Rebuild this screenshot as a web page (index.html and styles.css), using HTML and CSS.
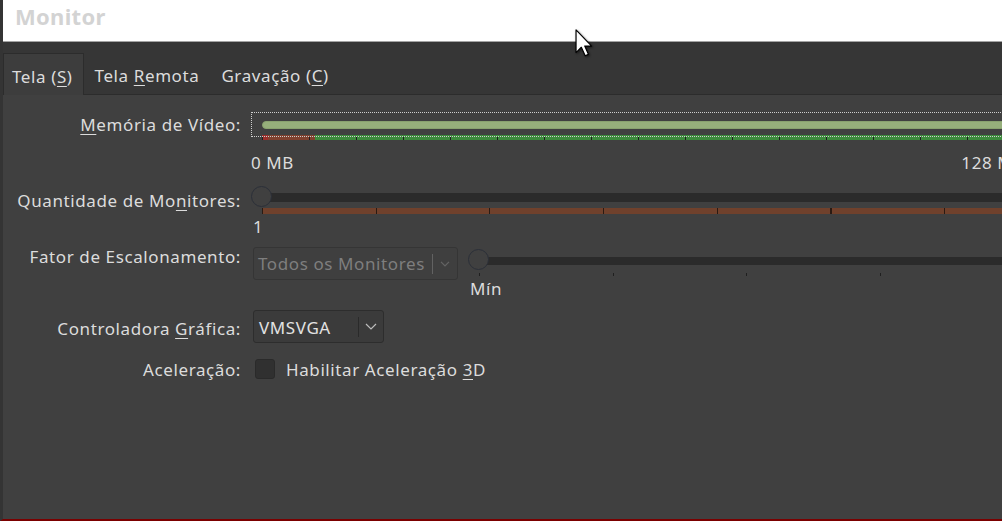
FILE: index.html
```html
<!DOCTYPE html>
<html lang="pt-BR">
<head>
<meta charset="utf-8">
<title>Monitor</title>
<link rel="stylesheet" href="styles.css">
</head>
<body>
<div class="app">
  <header class="titlebar"><span class="title">Monitor</span></header>
  <nav class="tabbar">
    <div class="tab active">Tela (<u>S</u>)</div>
    <div class="tab">Tela <u>R</u>emota</div>
    <div class="tab">Gravação (<u>C</u>)</div>
  </nav>
  <main class="page">
    <div class="row row-mem">
      <div class="label"><u>M</u>emória de Vídeo:</div>
      <div class="field field-wide">
        <div class="mem-slider">
          <div class="mem-bar"></div>
          <div class="mem-ticks"></div>
          <div class="focus-ring"></div>
        </div>
        <div class="scale-labels"><span>0 MB</span><span>128 MB</span></div>
      </div>
    </div>

    <div class="row row-mon">
      <div class="label">Quantidade de Mo<u>n</u>itores:</div>
      <div class="field">
        <div class="slider">
          <div class="groove groove-mon"></div>
          <div class="handle"></div>
        </div>
        <div class="mon-bar"></div>
        <div class="value">1</div>
      </div>
    </div>

    <div class="row row-scale">
      <div class="label">Fator de Escalonamento:</div>
      <div class="field field-inline">
        <div class="combo combo-disabled">
          <span class="combo-text">Todos os Monitores</span>
          <span class="combo-sep"></span>
          <span class="combo-arrow"><svg width="10" height="6" viewBox="0 0 10 6"><polyline points="1,0.8 5,5 9,0.8" fill="none" stroke="#646464" stroke-width="1.2"/></svg></span>
        </div>
        <div class="scale-slider">
          <div class="slider">
            <div class="groove groove-scale"></div>
            <div class="handle"></div>
          </div>
          <div class="scale-ticks"></div>
          <div class="value">Mín</div>
        </div>
      </div>
    </div>

    <div class="row row-ctrl">
      <div class="label">Controladora <u>G</u>ráfica:</div>
      <div class="field">
        <div class="combo combo-ctrl">
          <span class="combo-text">VMSVGA</span>
          <span class="combo-sep"></span>
          <span class="combo-arrow"><svg width="12" height="7" viewBox="0 0 12 7"><polyline points="1,1 6,6 11,1" fill="none" stroke="#bdbdbd" stroke-width="1.2"/></svg></span>
        </div>
      </div>
    </div>

    <div class="row row-acc">
      <div class="label">Aceleração:</div>
      <div class="field field-inline">
        <span class="checkbox"></span>
        <span class="check-text">Habilitar Aceleração <u>3</u>D</span>
      </div>
    </div>
  </main>
</div>
<svg class="cursor" width="18" height="28" viewBox="0 0 12 19"><path d="M0.6,0.6 L0.6,16 L4.2,12.4 L6.8,18.2 L9,17.2 L6.5,11.6 L11.2,11.6 Z" fill="#fff" stroke="#000" stroke-width="0.8" stroke-linejoin="round"/></svg>
</body>
</html>
```

FILE: styles.css
```css
* { box-sizing: border-box; }

html, body {
  margin: 0;
  padding: 0;
}

body {
  width: 1002px;
  height: 521px;
  overflow: hidden;
  position: relative;
  background: #404040;
  font-family: "Noto Sans", "DejaVu Sans", sans-serif;
  font-size: 17px;
  letter-spacing: 0.6px;
  color: #dcdcdc;
}

u {
  text-decoration-thickness: 1px;
  text-underline-offset: 3px;
}

.app {
  height: 521px;
  display: flex;
  flex-direction: column;
  border-left: 3px solid #343434;
  border-bottom: 2px solid #7b0000;
}

.titlebar {
  height: 42px;
  flex: none;
  background: #ffffff;
  border-bottom: 1px solid #a4a4a4;
  padding-left: 12px;
  line-height: 33px;
}

.title {
  font-weight: 700;
  font-size: 22px;
  letter-spacing: 0.3px;
  color: #d3d3d3;
}

.tabbar {
  height: 53px;
  flex: none;
  display: flex;
  align-items: flex-end;
  background: #363636;
  border-bottom: 1px solid #2c2c2c;
}

.tab {
  height: 41px;
  padding: 12px 11px 0 11px;
  line-height: 22px;
  color: #dcdcdc;
}

.tab.active {
  background: #3d3d3d;
  border: 1px solid #2c2c2c;
  border-bottom: none;
  margin-bottom: -1px;
  height: 42px;
  padding-left: 8px;
  padding-right: 10px;
}

.page {
  flex: 1;
  padding-top: 17px;
  background: #404040;
}

.row {
  display: flex;
  align-items: flex-start;
}

.label {
  width: 238px;
  flex: none;
  text-align: right;
  line-height: 22px;
  padding-top: 2px;
  white-space: nowrap;
}

.field {
  margin-left: 10px;
  width: 760px;
  flex: none;
  line-height: 22px;
}

.field-wide {
  width: 774px;
}

.field-inline {
  display: flex;
  align-items: flex-start;
}

/* Video memory */
.mem-slider {
  position: relative;
  height: 28px;
  padding-top: 9px;
}

.mem-bar {
  margin-left: 11px;
  height: 8px;
  border-radius: 4px;
  background: #96af7b;
  border: 1px solid #89a26f;
}

.mem-ticks {
  margin: 6px 0 0 11px;
  height: 5px;
  background:
    repeating-linear-gradient(to right, #1f1f1f 0 1px, transparent 1px 47px) 0 2px / 100% 3px no-repeat,
    linear-gradient(to right, #9a2e2a 0 6px, #7f412f 6px 53px, #3c8a3c 53px);
}

.focus-ring {
  position: absolute;
  top: 0;
  left: 0;
  right: 0;
  height: 25px;
  border: 1px dotted #cfcfcf;
}

.scale-labels {
  margin-top: 12px;
  display: flex;
  justify-content: space-between;
}

/* Sliders */
.row-mon {
  margin-top: 12px;
}

.row-mon .label {
  margin-top: 2px;
}

.slider {
  position: relative;
  height: 21px;
}

.groove {
  position: relative;
  margin-left: 11px;
  background: #2b2b2b;
  border-radius: 4px;
}

.groove-mon {
  top: 7px;
  height: 9px;
}

.groove-scale {
  top: 8px;
  height: 8px;
}

.handle {
  position: absolute;
  left: 0;
  top: 0;
  width: 21px;
  height: 21px;
  border-radius: 50%;
  background: #404040;
  border: 1.5px solid #2b2f38;
}

.mon-bar {
  margin: 1px 0 0 11px;
  height: 6px;
  background:
    repeating-linear-gradient(to right, #2a1a12 0 1px, transparent 1px 113.7px),
    #70412c;
}

.value {
  margin-left: 2px;
  line-height: 22px;
  padding-top: 2px;
}

.row-scale {
  margin-top: 6px;
}

.combo {
  display: flex;
  align-items: center;
  height: 33px;
  border-radius: 3px;
  flex: none;
}

.combo-text {
  flex: 1;
  white-space: nowrap;
  line-height: 22px;
  padding-top: 1px;
}

.combo-sep {
  width: 1px;
  height: 20px;
}

.combo-arrow {
  width: 24px;
  display: flex;
  justify-content: center;
  align-items: center;
}

.combo-disabled {
  margin: 3px 0 0 2px;
  width: 205px;
  padding-left: 4px;
  background: #3f3f3f;
  border: 1px solid #353535;
  color: #7e7e7e;
}

.combo-disabled .combo-sep {
  background: #626262;
}

.scale-slider {
  margin: 5px 0 0 10px;
  flex: 1;
}

.scale-ticks {
  margin: 3px 0 0 11px;
  height: 3px;
  background: repeating-linear-gradient(to right, #1f1f1f 0 1px, transparent 1px 133.67px);
}

.scale-slider .value {
  margin-top: 0;
}

.row-ctrl {
  margin-top: 10px;
}

.row-ctrl .label {
  margin-top: 6px;
}

.combo-ctrl {
  margin-left: 2px;
  width: 131px;
  padding-left: 5px;
  background: #3b3b3b;
  border: 1px solid #2d2d2d;
  color: #e2e2e2;
}

.combo-ctrl .combo-text {
  padding-top: 2px;
}

.combo-ctrl .combo-sep {
  background: #2a2a2a;
}

.row-acc {
  margin-top: 15px;
}

.row-acc .label {
  padding-top: 1px;
}

.checkbox {
  margin: 1px 0 0 4px;
  width: 20px;
  height: 20px;
  border-radius: 3px;
  background: #303030;
  border: 1px solid #2a2a2a;
  flex: none;
}

.check-text {
  margin-left: 11px;
  line-height: 22px;
  padding-top: 1px;
  white-space: nowrap;
}

.cursor {
  position: absolute;
  left: 575px;
  top: 29px;
  filter: drop-shadow(1px 1px 1px rgba(0,0,0,0.5));
}
```
